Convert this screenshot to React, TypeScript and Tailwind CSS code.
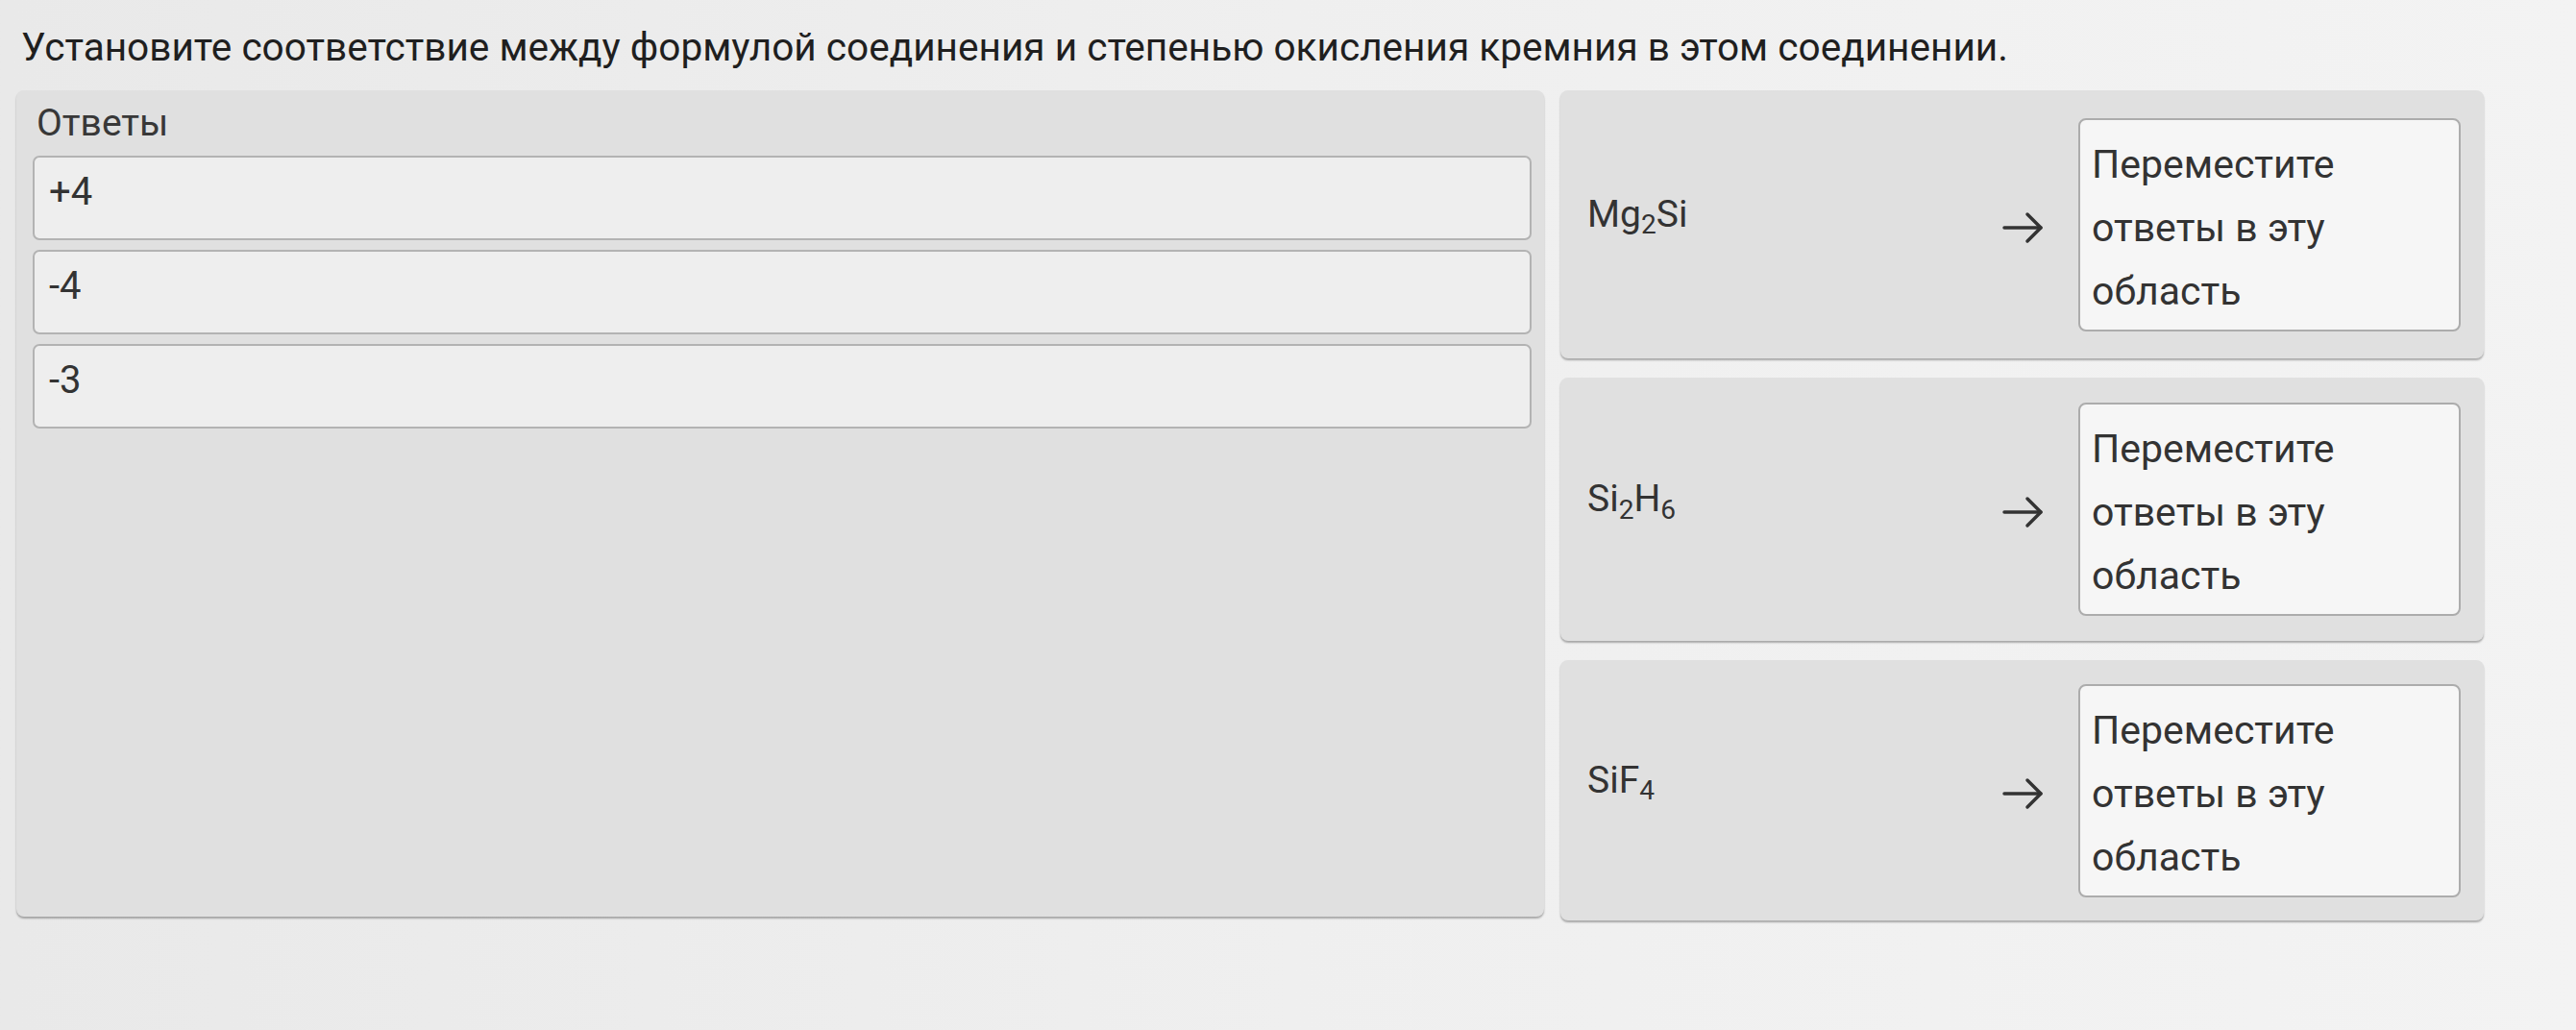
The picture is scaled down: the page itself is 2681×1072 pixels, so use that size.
const answers = ['+4', '-4', '-3'];

const Sub = ({ children }: { children: string }) => (
  <sub className="text-[0.72em] leading-none relative top-[0.28em] bottom-auto">{children}</sub>
);

const rows = [
  { id: 'mg2si', formula: <>Mg<Sub>2</Sub>Si</>, h: 'h-[279px]' },
  { id: 'si2h6', formula: <>Si<Sub>2</Sub>H<Sub>6</Sub></>, h: 'h-[274px]' },
  { id: 'sif4', formula: <>SiF<Sub>4</Sub></>, h: 'h-[271px]' },
];

const Arrow = () => (
  <svg width="46" height="34" viewBox="0 0 46 34" fill="none" stroke="#333" strokeWidth="3.5" strokeLinecap="round" strokeLinejoin="round">
    <path d="M3 17h38" />
    <path d="M27 3l14 14-14 14" />
  </svg>
);

export default function App() {
  return (
    <div className="w-[2681px] h-[1072px] overflow-hidden bg-gradient-to-r from-[#e9e9e9] via-[#efefef] to-[#f3f3f3] font-['Roboto',sans-serif] text-[#2f2f2f]">
      <h1 className="pl-[22px] pt-[26px] text-[40.6px] leading-[46px] font-normal text-[#1f1f1f]">
        Установите соответствие между формулой соединения и степенью окисления кремния в этом соединении.
      </h1>

      <div className="mt-[22px] pl-[17px] flex gap-[17px]">
        {/* answers pool */}
        <div className="w-[1590px] h-[860px] rounded-[8px] bg-[#e0e0e0] shadow-[0_2px_2px_rgba(0,0,0,0.3)] pt-[14px] pl-[17px] pr-[13px]">
          <div className="pl-[4px] text-[39px] leading-[40px] text-[#383838]">Ответы</div>
          <div className="mt-[14px] flex flex-col gap-[10px]">
            {answers.map((a) => (
              <div
                key={a}
                className="h-[88px] rounded-[7px] border-2 border-[#b3b3b3] bg-[#eeeeee] px-[15px] pt-[15px] text-[40px] leading-[42px] text-[#333]"
              >
                {a}
              </div>
            ))}
          </div>
        </div>

        {/* targets */}
        <div className="w-[961px] flex flex-col gap-[20px]">
          {rows.map((r) => (
            <div
              key={r.id}
              className={`${r.h} rounded-[8px] bg-[#e0e0e0] shadow-[0_2px_2px_rgba(0,0,0,0.3)] pl-[28px] pr-[24px] flex items-center`}
            >
              <div className="flex-1 text-[39px] leading-[42px] text-[#333] -mt-[22px]">{r.formula}</div>
              <div className="mr-[34px] mt-[6px]">
                <Arrow />
              </div>
              <div className="w-[398px] h-[222px] rounded-[8px] border-2 border-[#acacac] bg-[#f6f6f6] pl-[12px] pt-[13px] text-[41px] leading-[66px] text-[#333]">
                Переместите ответы в эту область
              </div>
            </div>
          ))}
        </div>
      </div>
    </div>
  );
}
